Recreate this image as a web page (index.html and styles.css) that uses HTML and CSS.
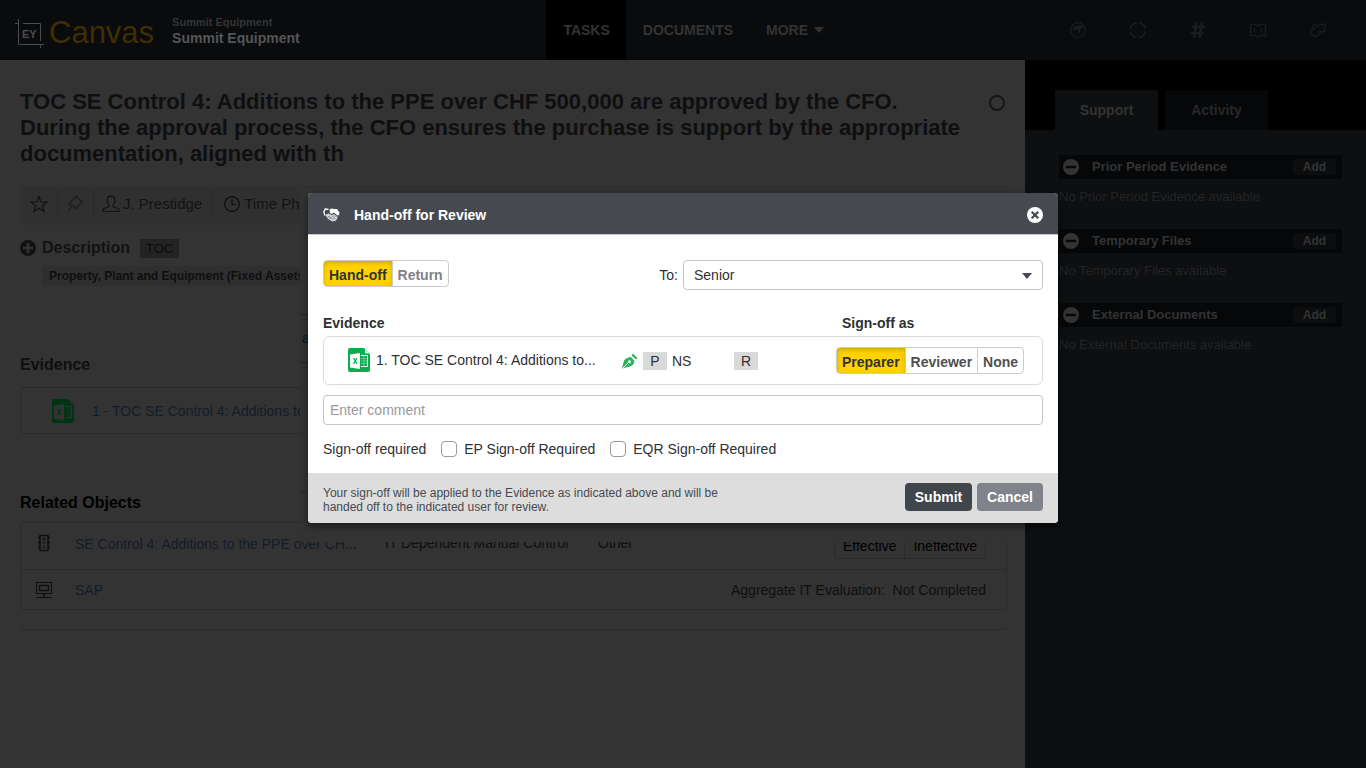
FILE: index.html
```html
<!DOCTYPE html>
<html lang="en">
<head>
<meta charset="utf-8">
<title>Canvas - Hand-off for Review</title>
<link rel="stylesheet" href="styles.css">
</head>
<body>
<div class="page">
  <header class="topbar">
    <div class="brand">
      <svg class="brand-mark" width="30" height="30" viewBox="0 0 30 30" fill="none" stroke="currentColor" stroke-width="1"><path d="M3.500 1v25.500H29M0 5.500h3.500M8 5.500h17.500V23M25.500 26.500V30"/><text x="7" y="20" font-family="Liberation Sans, Arial, sans-serif" font-size="11" font-weight="bold" fill="currentColor" stroke="none">EY</text></svg>
      <span class="brand-name">Canvas</span>
      <div class="client"><span class="client-group">Summit Equipment</span><span class="client-name">Summit Equipment</span></div>
    </div>
    <nav class="nav">
      <a href="#" class="nav-link active">TASKS</a>
      <a href="#" class="nav-link">DOCUMENTS</a>
      <a href="#" class="nav-link">MORE <svg width="10" height="6" viewBox="0 0 10 6"><path d="M0 0h10L5 6z" fill="currentColor"/></svg></a>
    </nav>
    <div class="tools">
      <button class="tool" aria-label="Global"><svg width="18" height="18" viewBox="0 0 18 18"><circle cx="9" cy="9" r="7.300" fill="none" stroke="currentColor" stroke-width="1.300"/><path d="M4 8Q5 4.500 9 5l5-.5.500 2-3 1.500-.5 3-2.500 2 .5-4L8 8.500 5 9z" fill="currentColor"/></svg></button>
      <button class="tool" aria-label="Progress"><svg width="18" height="18" viewBox="0 0 18 18" fill="none" stroke="currentColor" stroke-width="1.600"><path d="M10.300 1.600a7.500 7.500 0 0 1 6.100 6.100M16.400 10.300a7.500 7.500 0 0 1-6.100 6.100M7.700 16.400a7.500 7.500 0 0 1-6.100-6.100M1.600 7.700a7.500 7.500 0 0 1 6.100-6.100"/></svg></button>
      <button class="tool" aria-label="Tags"><svg width="18" height="18" viewBox="0 0 18 18" fill="none" stroke="currentColor" stroke-width="2.400"><path d="M7.500 1L5 17M13 1l-2.500 16M3.500 6H16M2 12h12.500"/></svg></button>
      <button class="tool" aria-label="Map"><svg width="18" height="18" viewBox="0 0 18 18" fill="none" stroke="currentColor" stroke-width="1.300"><path d="M1.500 4l3-1L9 4.500 13.500 3l3 1v11l-3-1L9 15.500 4.500 14l-3 1z"/><path d="M5.500 6.500v5M12.500 6.500v5" stroke-width="1"/></svg></button>
      <button class="tool" aria-label="Extensions"><svg width="18" height="18" viewBox="0 0 18 18" fill="none" stroke="currentColor" stroke-width="1.200"><path transform="rotate(-35 9 9)" d="M3 5.500h4C4.500 1 11.500 1 9.500 5.500H15v2c4-1.500 4 4 0 3v3h-4.500c1.500-4-4.500-4-3 0H3v-3c-3.500 1-3.500-4 0-3z"/></svg></button>
    </div>
  </header>

  <div class="content">
    <main class="main">
      <div class="title-row">
        <h1 class="title">TOC SE Control 4: Additions to the PPE over CHF 500,000 are approved by the CFO. During the approval process, the CFO ensures the purchase is support by the appropriate documentation, aligned with th</h1>
        <button class="complete" aria-label="Mark complete"></button>
      </div>
      <div class="meta">
        <span class="meta-item"><svg width="18" height="18" viewBox="0 0 18 18" fill="none" stroke="currentColor" stroke-width="1.200"><path d="M9 1.500l2 5.500h6l-4.700 3.700 1.700 5.800L9 13.200 4 16.500l1.700-5.800L1 7h6z"/></svg></span>
        <span class="meta-item faint"><svg width="18" height="18" viewBox="0 0 18 18" fill="none" stroke="currentColor" stroke-width="1.300"><path d="M10.500 1.500l6 5.500-7 7-1.500-3-5.500-2zM6.500 10.500L2.500 16" stroke-linejoin="round"/></svg></span>
        <span class="meta-item"><svg width="18" height="18" viewBox="0 0 18 18" fill="none" stroke="currentColor" stroke-width="1.200"><path d="M9 1.200c5 0 4.500 6.500 2 9v1.300l5.800 2.300v2.700H1.200v-2.700L7 11.500v-1.300c-2.500-2.500-3-9 2-9z"/></svg>J. Prestidge</span>
        <span class="meta-item phase"><svg width="18" height="18" viewBox="0 0 18 18" fill="none" stroke="currentColor" stroke-width="1.500"><circle cx="9" cy="9" r="7.300"/><path d="M9 4.500v5h4"/></svg>Time Phase</span>
      </div>
      <div class="desc">
        <svg width="16" height="16" viewBox="0 0 16 16"><circle cx="8" cy="8" r="8" fill="currentColor"/><path d="M8 3v10M3 8h10" stroke="#333" stroke-width="2.600"/></svg>
        <h2 class="heading">Description</h2><span class="tag">TOC</span>
      </div>
      <div class="account">Property, Plant and Equipment (Fixed Assets)</div>
      <h2 class="heading evidence-heading">Evidence</h2>
      <div class="card evidence-card">
        <svg class="xls" width="22" height="24" viewBox="0 0 22 24"><path d="M2 0h14l6 6v16a2 2 0 0 1-2 2H2a2 2 0 0 1-2-2V2a2 2 0 0 1 2-2z" fill="#003415"/><path d="M17 0l5 5h-4z" fill="#262d29"/><path d="M2 6.500L12 5v16L2 19.500z" fill="#333"/><path d="M13 7.500h6.500v11H13" fill="none" stroke="#333"/><path d="M13 10.500h6.500M13 13h6.500M13 15.500h6.500M16 7.500v11" stroke="#1c2f23" stroke-width=".6"/><path d="M5.500 10l3.500 6M9 10l-3.500 6" stroke="#003415" stroke-width="1.300"/></svg>
        <a href="#" class="link">1 - TOC SE Control 4: Additions to the PPE</a>
      </div>
      <h2 class="heading related-heading">Related Objects</h2>
      <div class="card related">
        <div class="object control-object">
          <svg width="16" height="18" viewBox="0 0 16 18" fill="none" stroke="currentColor"><rect x="4" y="1.500" width="8" height="15" stroke-width="1.500"/><path d="M2 3.500h2M2 8.500h2M2 13.500h2M12 3.500h2M12 8.500h2M12 13.500h2" stroke-width="1.500"/><circle cx="8" cy="5" r="1" fill="currentColor"/><g stroke="#1c1c1c"><circle cx="8" cy="9" r="1.200"/><circle cx="8" cy="13" r="1.200"/></g></svg>
          <a href="#" class="link">SE Control 4: Additions to the PPE over CH...</a>
          <span>IT Dependent Manual Control</span>
          <span>Other</span>
          <div class="rating"><button>Effective</button><button>Ineffective</button></div>
        </div>
        <div class="object app-object">
          <svg width="16" height="16" viewBox="0 0 16 16" fill="none" stroke="currentColor"><rect x=".5" y=".5" width="15" height="11"/><rect x="3.500" y="3.500" width="9" height="5" stroke-width="1.400"/><path d="M8 12v3" stroke-width="1.500"/><path d="M0 15.500h16"/></svg>
          <a href="#" class="link">SAP</a>
          <span class="evaluation">Aggregate IT Evaluation:&nbsp; Not Completed</span>
        </div>
      </div>
      <div class="card-end"></div>
    </main>

    <aside class="side">
      <div class="tabs"><button class="tab selected">Support</button><button class="tab">Activity</button></div>
      <div class="panels">
        <section class="panel">
          <div class="panel-head"><svg width="16" height="16" viewBox="0 0 16 16"><circle cx="8" cy="8" r="8" fill="currentColor"/><path d="M4 8h8" stroke="#060708" stroke-width="2.400" stroke-linecap="round"/></svg><h3>Prior Period Evidence</h3><button class="add">Add</button></div>
          <p>No Prior Period Evidence available</p>
        </section>
        <section class="panel">
          <div class="panel-head"><svg width="16" height="16" viewBox="0 0 16 16"><circle cx="8" cy="8" r="8" fill="currentColor"/><path d="M4 8h8" stroke="#060708" stroke-width="2.400" stroke-linecap="round"/></svg><h3>Temporary Files</h3><button class="add">Add</button></div>
          <p>No Temporary Files available</p>
        </section>
        <section class="panel">
          <div class="panel-head"><svg width="16" height="16" viewBox="0 0 16 16"><circle cx="8" cy="8" r="8" fill="currentColor"/><path d="M4 8h8" stroke="#060708" stroke-width="2.400" stroke-linecap="round"/></svg><h3>External Documents</h3><button class="add">Add</button></div>
          <p>No External Documents available</p>
        </section>
      </div>
    </aside>
  </div>

  <div class="underlay">
    <div class="underlay-link"><a href="#">a</a></div>
    <div class="underlay-row"></div>
  </div>

  <div class="modal" role="dialog" aria-labelledby="modal-title">
    <div class="modal-head">
      <svg width="18" height="14" viewBox="0 0 18 14"><path d="M6.500 1.500Q9 0 11 1h3l2.500 3.500L16 7l-1.500.5L11 4.500 8.500 6 7 5z" fill="#fff"/><path d="M2.500 7l3-1.500L8.500 7l3-1L15 9l-2 3.500-3.500 1L5 11z" fill="#d9dadc"/><path d="M5.500 1.300L2.200 1 .8 4 2 7.500" stroke="#fff" fill="none" stroke-width="1.300"/><path d="M9 7.500l3.500 3.500M11 6.500l3 3M7 8.500l3.500 3.500M4.500 9.500L6.500 8M6 11l2-1.500" stroke="#464a50" stroke-width=".7"/></svg>
      <h2 id="modal-title">Hand-off for Review</h2>
      <button class="close" aria-label="Close"><svg width="16" height="16" viewBox="0 0 16 16"><circle cx="8" cy="8" r="8" fill="#fff"/><path d="M4.700 4.700l6.600 6.600M11.300 4.700l-6.600 6.600" stroke="#464a50" stroke-width="2.200"/></svg></button>
    </div>
    <div class="modal-body">
      <div class="direction">
        <div class="segmented"><button class="on" aria-pressed="true">Hand-off</button><button class="muted">Return</button></div>
        <div class="assignee">
          <label for="to">To:</label>
          <div class="select-wrap"><select id="to"><option>Senior</option></select><svg class="caret" width="10" height="6" viewBox="0 0 10 6"><path d="M0 0h10L5 6z" fill="#464a50"/></svg></div>
        </div>
      </div>
      <div class="columns"><span>Evidence</span><span>Sign-off as</span></div>
      <div class="signoff">
        <svg class="xls" width="22" height="24" viewBox="0 0 22 24"><path d="M2 0h14l6 6v16a2 2 0 0 1-2 2H2a2 2 0 0 1-2-2V2a2 2 0 0 1 2-2z" fill="#0bab4f"/><path d="M16.500 0H22v5.500z" fill="#fff"/><path d="M17 1l4.500 4.500H17z" fill="#d6f0e0"/><path d="M2 6.500L12 5v16L2 19.500z" fill="#fff"/><path d="M13 7.500h6.500v11H13" fill="none" stroke="#fff"/><path d="M13 10.500h6.500M13 13h6.500M13 15.500h6.500M16 7.500v11" stroke="#8fdcae" stroke-width=".6"/><path d="M5.500 10l3.500 6M9 10l-3.500 6" stroke="#0bab4f" stroke-width="1.300"/></svg>
        <span class="doc">1. TOC SE Control 4: Additions to...</span>
        <div class="prepared"><svg width="16" height="16" viewBox="0 0 16 16"><path d="M0 15.500L2 7.500Q5 4 9 4l3.500 4Q12 12 8 13.500z" fill="#2db35b"/><path d="M9.500 2.500L11 .500l4.700 5-2 .7z" fill="#2db35b"/><path d="M1 15l5.500-5.500" stroke="#fff"/><circle cx="7.500" cy="8.700" r="1.500" fill="#fff"/></svg><span class="role">P</span>NS</div>
        <span class="role reviewed">R</span>
        <div class="segmented"><button class="on" aria-pressed="true">Preparer</button><button>Reviewer</button><button>None</button></div>
      </div>
      <input class="comment" type="text" placeholder="Enter comment" aria-label="Enter comment">
      <div class="required"><span class="required-label">Sign-off required</span>
        <label><input type="checkbox">EP Sign-off Required</label>
        <label><input type="checkbox">EQR Sign-off Required</label>
      </div>
    </div>
    <div class="modal-foot">
      <p>Your sign-off will be applied to the Evidence as indicated above and will be handed off to the indicated user for review.</p>
      <button class="btn">Submit</button><button class="btn secondary">Cancel</button>
    </div>
  </div>
</div>
</body>
</html>
```
FILE: styles.css
```css
* { box-sizing: border-box; }
body { margin: 0; font: 14px/16px "Liberation Sans", Arial, sans-serif; color: #0f0f10; background: #333; }
h1, h2, h3, p { margin: 0; }
a { text-decoration: none; color: inherit; }
button, input, select { font: inherit; color: inherit; }
button { border: 0; background: none; padding: 0; cursor: pointer; }
svg { display: block; flex: none; }

.page { position: relative; min-height: 100vh; display: flex; flex-direction: column; overflow: hidden; }

/* top bar */
.topbar { display: flex; height: 60px; background: #0a0b0d; color: #333; }
.brand { flex: 0 0 40%; display: flex; align-items: center; padding-left: 15px; }
.brand-mark { color: #4a4b4c; margin-top: 6px; }
.brand-name { font-size: 31px; line-height: 36px; color: #3e2f00; margin: 5px 18px 0 4px; }
.client { display: flex; flex-direction: column; font-weight: bold; }
.client-group { font-size: 11px; color: #343536; }
.client-name { color: #555657; }
.nav { display: flex; font-weight: bold; }
.nav-link { display: flex; align-items: center; gap: 6px; padding: 0 16px 0 17px; }
.nav-link.active { background: #000; }
.tools { display: flex; margin-left: auto; padding-right: 18px; }
.tool { width: 60px; display: grid; place-items: center; color: #1b1c1e; }

/* main column */
.content { flex: 1; display: flex; }
.main { flex: 1; min-width: 0; padding: 29px 18px 0 20px; }
.title-row { display: flex; justify-content: space-between; align-items: flex-start; }
.title { font-size: 22px; line-height: 26px; max-width: 950px; }
.complete { flex: none; width: 16px; height: 16px; margin-top: 6px; margin-right: 2px; border: 2px solid #161616; border-radius: 50%; }
.meta { display: flex; align-items: center; height: 39px; margin-top: 19px; padding: 0 2px 4px; background: #303030; font-size: 15px; color: #121314; }
.meta-item { display: flex; align-items: center; gap: 3px; height: 26px; padding: 0 9px 0 8px; border-right: 1px solid #2a2a2a; }
.meta-item:last-child { border: 0; }
.phase { padding-left: 11px; }
.faint { color: #1e1e1f; }
.heading { font-size: 16px; line-height: 20px; }
.desc { display: flex; align-items: center; gap: 6px; margin-top: 13px; height: 20px; color: #121213; }
.tag { margin-left: 4px; padding: 2px 6px 1px; font-size: 13px; background: #232323; color: #0c0c0d; }
.account { width: 320px; margin: 8px 0 0 23px; padding: 2px 6px; background: #2f2f2f; font-size: 12px; font-weight: bold; white-space: nowrap; }
.card { border: 1px solid #2a2a2a; border-radius: 4px; }
.link { color: #141c28; }
.evidence-heading { margin-top: 69px; }
.evidence-card { display: flex; align-items: center; gap: 18px; height: 47px; margin-top: 12px; padding: 0 31px; }
.related-heading { margin-top: 59px; color: #000; }
.related { margin-top: 9px; }
.object { display: grid; align-items: center; padding: 0 20px 0 15px; }
.control-object { grid-template-columns: 39px 310px 213px 1fr auto; height: 47px; padding-bottom: 4px; border-bottom: 1px solid #2a2a2a; }
.control-object > span { margin-top: -2px; }
.control-object > svg { margin-bottom: 2px; }
.app-object { grid-template-columns: 39px 1fr auto; height: 39px; }
.rating { display: flex; height: 30px; border: 1px solid #2a2a2a; border-radius: 4px; color: #000; }
.rating button { padding: 4px 8px 0; }
.rating button + button { border-left: 1px solid #2a2a2a; }
.card-end { height: 20px; border-bottom: 1px solid #2a2a2a; border-radius: 4px; }

/* support panel */
.side { flex: 0 0 341px; background: #0d0f11; color: #333; }
.tabs { display: flex; align-items: flex-end; gap: 7px; height: 70px; padding-left: 30px; background: #000; font-weight: bold; }
.tab { width: 103px; height: 40px; background: #060708; font-weight: bold; color: #282828; }
.tab.selected { background: #0d0f11; color: #333; }
.panels { display: grid; gap: 25px; padding: 25px 24px 0 34px; font-size: 13px; }
.panel p { margin-top: 10px; line-height: 15px; color: #232425; }
.panel-head { display: flex; align-items: center; height: 24px; padding: 0 6px 0 4px; background: #060708; }
.panel-head h3 { font-size: 13px; margin-left: 13px; }
.add { margin-left: auto; width: 43px; border-radius: 3px; background: #0c0d0f; font-size: 12px; font-weight: bold; }

/* area that sits behind the dialog */
.underlay { position: absolute; top: 188px; left: calc(50% - 383px); right: 341px; height: 354px; padding-top: 126px; background: #333; }
.underlay-link { height: 49px; padding: 15px 2px; border: 1px solid #252525; border-width: 1px 0; color: #0a1b28; }
.underlay-row { height: 130px; border: 1px solid #292929; border-width: 0 0 1px; }

/* dialog */
.modal { position: absolute; top: 193px; left: 50%; width: 750px; margin-left: -375px; border-radius: 4px; overflow: hidden; background: #fff; color: #2f3033; box-shadow: 0 3px 8px rgba(0, 0, 0, .5); }
.modal-head { display: flex; align-items: center; height: 42px; padding: 2px 15px 0; background: #464a50; border-bottom: 1px solid #c4c5c7; color: #fff; }
.modal-head h2 { flex: 1; margin-left: 13px; font-size: 14px; line-height: 16px; }
.modal-body { padding: 25px 15px 16px; }
.direction { display: flex; justify-content: space-between; align-items: flex-start; }
.segmented { display: flex; height: 27px; border: 1px solid #ccc; border-radius: 4px; overflow: hidden; font-weight: bold; color: #505052; }
.segmented button { padding: 2px 5px 0; }
.segmented button + button { border-left: 1px solid #ccc; }
.segmented .on { background: #ffd200; color: #333; box-shadow: inset 0 2px 4px rgba(0, 0, 0, .2); }
.segmented .muted { color: #808288; }
.assignee { display: flex; gap: 5px; align-items: center; }
.select-wrap { position: relative; width: 360px; }
.select-wrap select { display: block; width: 100%; height: 30px; padding: 0 10px; border: 1px solid #c4c4c4; border-radius: 4px; background: #fff; appearance: none; }
.caret { position: absolute; right: 11px; top: 13px; pointer-events: none; }
.columns { display: grid; grid-template-columns: 519px 1fr; margin-top: 25px; font-weight: bold; }
.signoff { display: grid; grid-template-columns: 28px 246px 112px 102px auto; align-items: center; height: 49px; margin-top: 5px; padding: 0 0 2px 24px; border: 1px solid #dcdcdc; border-radius: 6px; }
.signoff .segmented { justify-self: start; margin-top: 2px; }
.prepared { display: flex; align-items: center; gap: 5px; padding-top: 2px; }
.role { width: 24px; height: 18px; line-height: 18px; text-align: center; background: #d9d9d9; }
.reviewed { margin-top: 2px; }
.comment { display: block; width: 100%; height: 30px; margin-top: 10px; padding: 0 6px; border: 1px solid #c4c4c4; border-radius: 4px; }
.comment::placeholder { color: #999; }
.required { display: flex; align-items: center; gap: 15px; margin-top: 16px; }
.required label { display: flex; align-items: center; gap: 7px; }
.required input { appearance: none; width: 16px; height: 16px; margin: 0; border: 1px solid #999; border-radius: 4px; background: #fff; }
.modal-foot { display: flex; align-items: center; gap: 5px; height: 50px; padding: 0 15px 2px; background: #ddd; }
.modal-foot p { width: 420px; margin-right: auto; padding-top: 5px; font-size: 12px; line-height: 14px; color: #464a50; }
.btn { width: 67px; height: 28px; border-radius: 4px; background: #41464d; color: #fff; font-weight: bold; }
.btn.secondary { width: 66px; background: #808389; }
```
